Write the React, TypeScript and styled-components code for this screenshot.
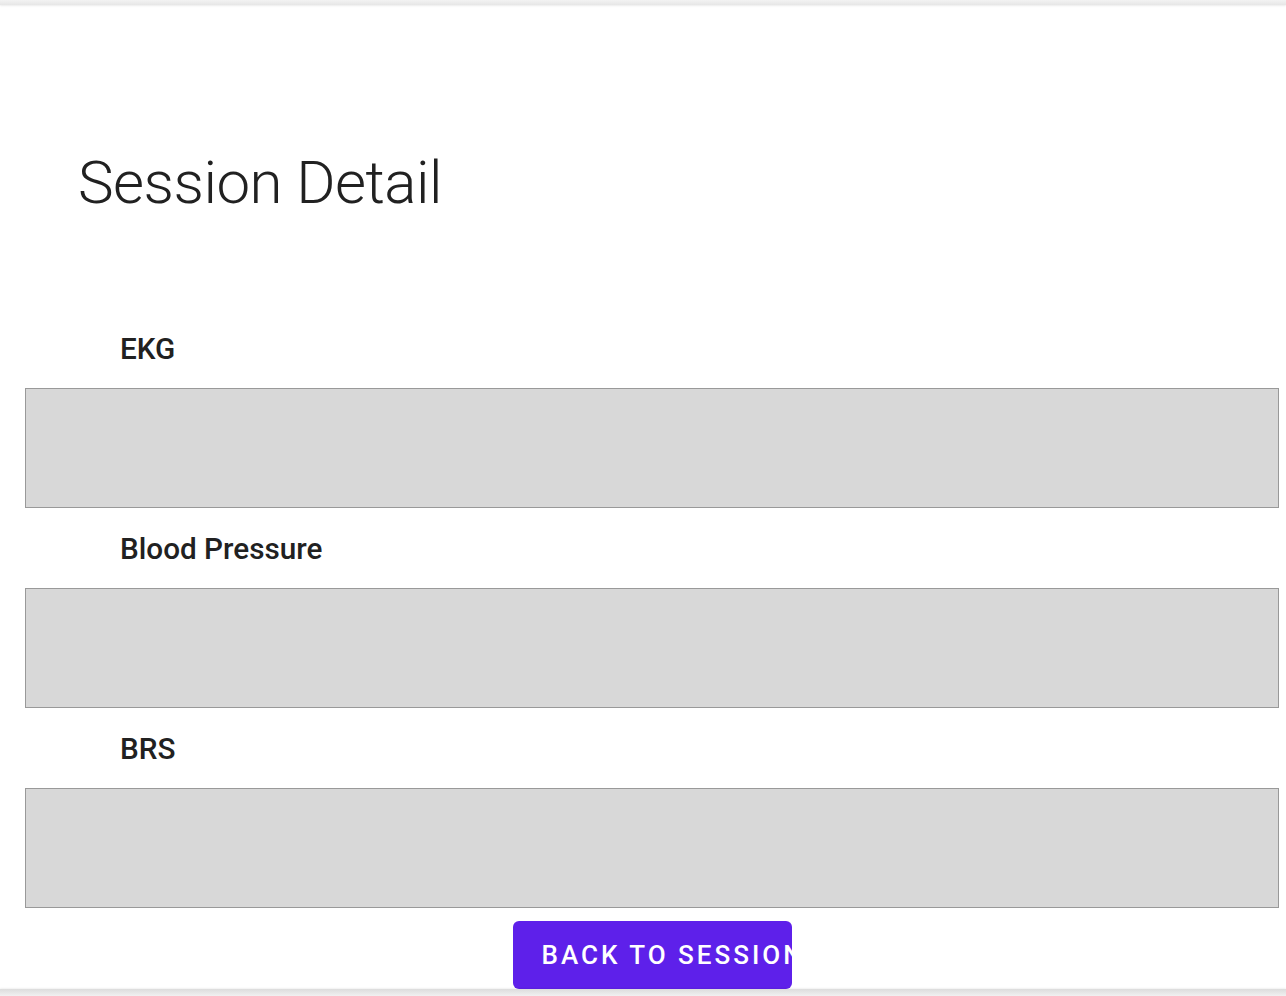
import React from 'react';
import styled, { createGlobalStyle } from 'styled-components';

const GlobalStyle = createGlobalStyle`
  html, body {
    margin: 0;
    padding: 0;
    background: #fff;
    font-family: Roboto, "Liberation Sans", sans-serif;
    color: #212121;
  }
`;

const sections = ['EKG', 'Blood Pressure', 'BRS'];

const App: React.FC = () => {
  return (
    <Page>
      <GlobalStyle />
      <TopEdge />
      <Content>
        <Title>Session Detail</Title>
        <Sections>
          {sections.map((name) => (
            <Section key={name}>
              <Label>{name}</Label>
              <ChartBox />
            </Section>
          ))}
        </Sections>
        <Footer>
          <BackButton>BACK TO SESSIONS</BackButton>
        </Footer>
      </Content>
      <BottomEdge />
    </Page>
  );
};

export default App;

const Page = styled.div`
  width: 1286px;
  height: 996px;
  display: flex;
  flex-direction: column;
  overflow: hidden;
  background: #fff;
`;

const TopEdge = styled.div`
  height: 5px;
  flex-shrink: 0;
  background: linear-gradient(#f3f3f3, #e6e6e6);
  box-shadow: 0 1px 2px rgba(0, 0, 0, 0.08);
`;

const BottomEdge = styled.div`
  height: 7px;
  flex-shrink: 0;
  margin-top: auto;
  background: linear-gradient(#dcdcdc, #f1f1f1);
  box-shadow: 0 -1px 2px rgba(0, 0, 0, 0.06);
`;

const Content = styled.div`
  padding: 0 7px 0 25px;
  display: flex;
  flex-direction: column;
`;

const Title = styled.h1`
  margin: 142px 0 0 53px;
  font-size: 60px;
  line-height: 72px;
  font-weight: 300;
  letter-spacing: -0.5px;
  color: #212121;
`;

const Sections = styled.div`
  margin-top: 89px;
  display: flex;
  flex-direction: column;
`;

const Section = styled.section`
  display: flex;
  flex-direction: column;
`;

const Label = styled.div`
  height: 80px;
  display: flex;
  align-items: center;
  padding: 1px 0 0 95px;
  box-sizing: border-box;
  font-size: 29.7px;
  font-weight: 500;
  color: #212121;
`;

const ChartBox = styled.div`
  box-sizing: border-box;
  height: 120px;
  background: #d8d8d8;
  border: 1px solid #999;
`;

const Footer = styled.div`
  display: flex;
  justify-content: center;
  margin-top: 13px;
`;

const BackButton = styled.button`
  width: 279px;
  height: 68px;
  box-sizing: border-box;
  padding: 0 0 0 29px;
  border: none;
  border-radius: 6px;
  background: #5e20ea;
  color: #fff;
  font-family: Roboto, "Liberation Sans", sans-serif;
  font-size: 26px;
  font-weight: 500;
  letter-spacing: 3px;
  text-align: left;
  white-space: nowrap;
  overflow: hidden;
  cursor: pointer;
`;
